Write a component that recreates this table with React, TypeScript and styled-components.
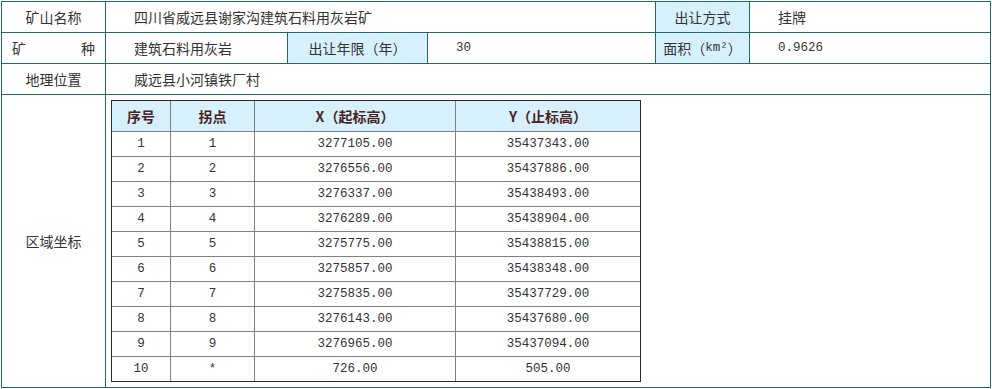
import { createGlobalStyle } from 'styled-components'
import styled from 'styled-components'

const GlobalStyle = createGlobalStyle`
  html, body {
    margin: 0;
    padding: 0;
    background: #ffffff;
  }
  body {
    font-family: 'Noto Sans CJK SC', 'Noto Sans', sans-serif;
    color: #333333;
  }
`

const Page = styled.div`
  padding: 1px 0 0 1px;
`

const InfoGrid = styled.div`
  display: grid;
  grid-template-columns: 104px 182px 140px 228px 94px 241px;
  grid-template-rows: 31px 31px 31px 293px;
  width: 989px;
  border-left: 1px solid #226a68;
  border-top: 1px solid #226a68;
`

const Cell = styled.div<{ $span?: number; $label?: boolean; $blue?: boolean }>`
  grid-column: span ${(p) => p.$span ?? 1};
  box-sizing: border-box;
  border-right: 1px solid #226a68;
  border-bottom: 1px solid #226a68;
  background: ${(p) => (p.$blue ? '#d7f1fc' : '#ffffff')};
  display: flex;
  align-items: center;
  justify-content: ${(p) => (p.$label ? 'center' : 'flex-start')};
  padding-left: ${(p) => (p.$label ? '0' : '28px')};
  font-size: 14px;
  line-height: 1;
  white-space: nowrap;
`

const SpreadLabel = styled(Cell)`
  justify-content: space-between;
  padding: 0 10px;
`

const Num = styled.span`
  font-family: 'Liberation Mono', 'DejaVu Sans Mono', monospace;
  font-size: 12.5px;
`

const CoordCell = styled.div`
  grid-column: span 5;
  box-sizing: border-box;
  border-right: 1px solid #226a68;
  border-bottom: 1px solid #226a68;
  padding: 5px;
`

const CoordTable = styled.div`
  display: grid;
  grid-template-columns: 59px 84px 201px 185px;
  grid-template-rows: 31px repeat(10, 25px);
  width: 529px;
  border-left: 1px solid #2b2b2b;
  border-top: 1px solid #2b2b2b;
  position: relative;
  &::after {
    content: '';
    position: absolute;
    inset: -1px 0 0 -1px;
    border-right: 1px solid #2b2b2b;
    border-bottom: 1px solid #2b2b2b;
    pointer-events: none;
  }
`

const Th = styled.div`
  box-sizing: border-box;
  border-right: 1px solid #808080;
  border-bottom: 1px solid #808080;
  background: #d7f1fc;
  display: flex;
  align-items: center;
  justify-content: center;
  font-size: 14px;
  font-weight: 700;
  color: #4a2424;
`

const Td = styled.div`
  box-sizing: border-box;
  border-right: 1px solid #808080;
  border-bottom: 1px solid #808080;
  display: flex;
  align-items: center;
  justify-content: center;
  font-family: 'Liberation Mono', 'DejaVu Sans Mono', monospace;
  font-size: 12.5px;
  color: #333333;
`

const points = [
  ['1', '1', '3277105.00', '35437343.00'],
  ['2', '2', '3276556.00', '35437886.00'],
  ['3', '3', '3276337.00', '35438493.00'],
  ['4', '4', '3276289.00', '35438904.00'],
  ['5', '5', '3275775.00', '35438815.00'],
  ['6', '6', '3275857.00', '35438348.00'],
  ['7', '7', '3275835.00', '35437729.00'],
  ['8', '8', '3276143.00', '35437680.00'],
  ['9', '9', '3276965.00', '35437094.00'],
  ['10', '*', '726.00', '505.00'],
]

const App = () => {
  return (
    <Page>
      <GlobalStyle />
      <InfoGrid>
        <Cell $label>矿山名称</Cell>
        <Cell $span={3}>四川省威远县谢家沟建筑石料用灰岩矿</Cell>
        <Cell $label $blue>出让方式</Cell>
        <Cell>挂牌</Cell>

        <SpreadLabel $label>
          <span>矿</span>
          <span>种</span>
        </SpreadLabel>
        <Cell>建筑石料用灰岩</Cell>
        <Cell $label $blue>出让年限（年）</Cell>
        <Cell>
          <Num>30</Num>
        </Cell>
        <Cell $label $blue>
          面积（<Num>km²</Num>）
        </Cell>
        <Cell>
          <Num>0.9626</Num>
        </Cell>

        <Cell $label>地理位置</Cell>
        <Cell $span={5}>威远县小河镇铁厂村</Cell>

        <Cell $label>区域坐标</Cell>
        <CoordCell>
          <CoordTable>
            <Th>序号</Th>
            <Th>拐点</Th>
            <Th>X（起标高）</Th>
            <Th>Y（止标高）</Th>
            {points.map((row) =>
              row.map((v, i) => <Td key={row[0] + '-' + i}>{v}</Td>)
            )}
          </CoordTable>
        </CoordCell>
      </InfoGrid>
    </Page>
  )
}

export default App
